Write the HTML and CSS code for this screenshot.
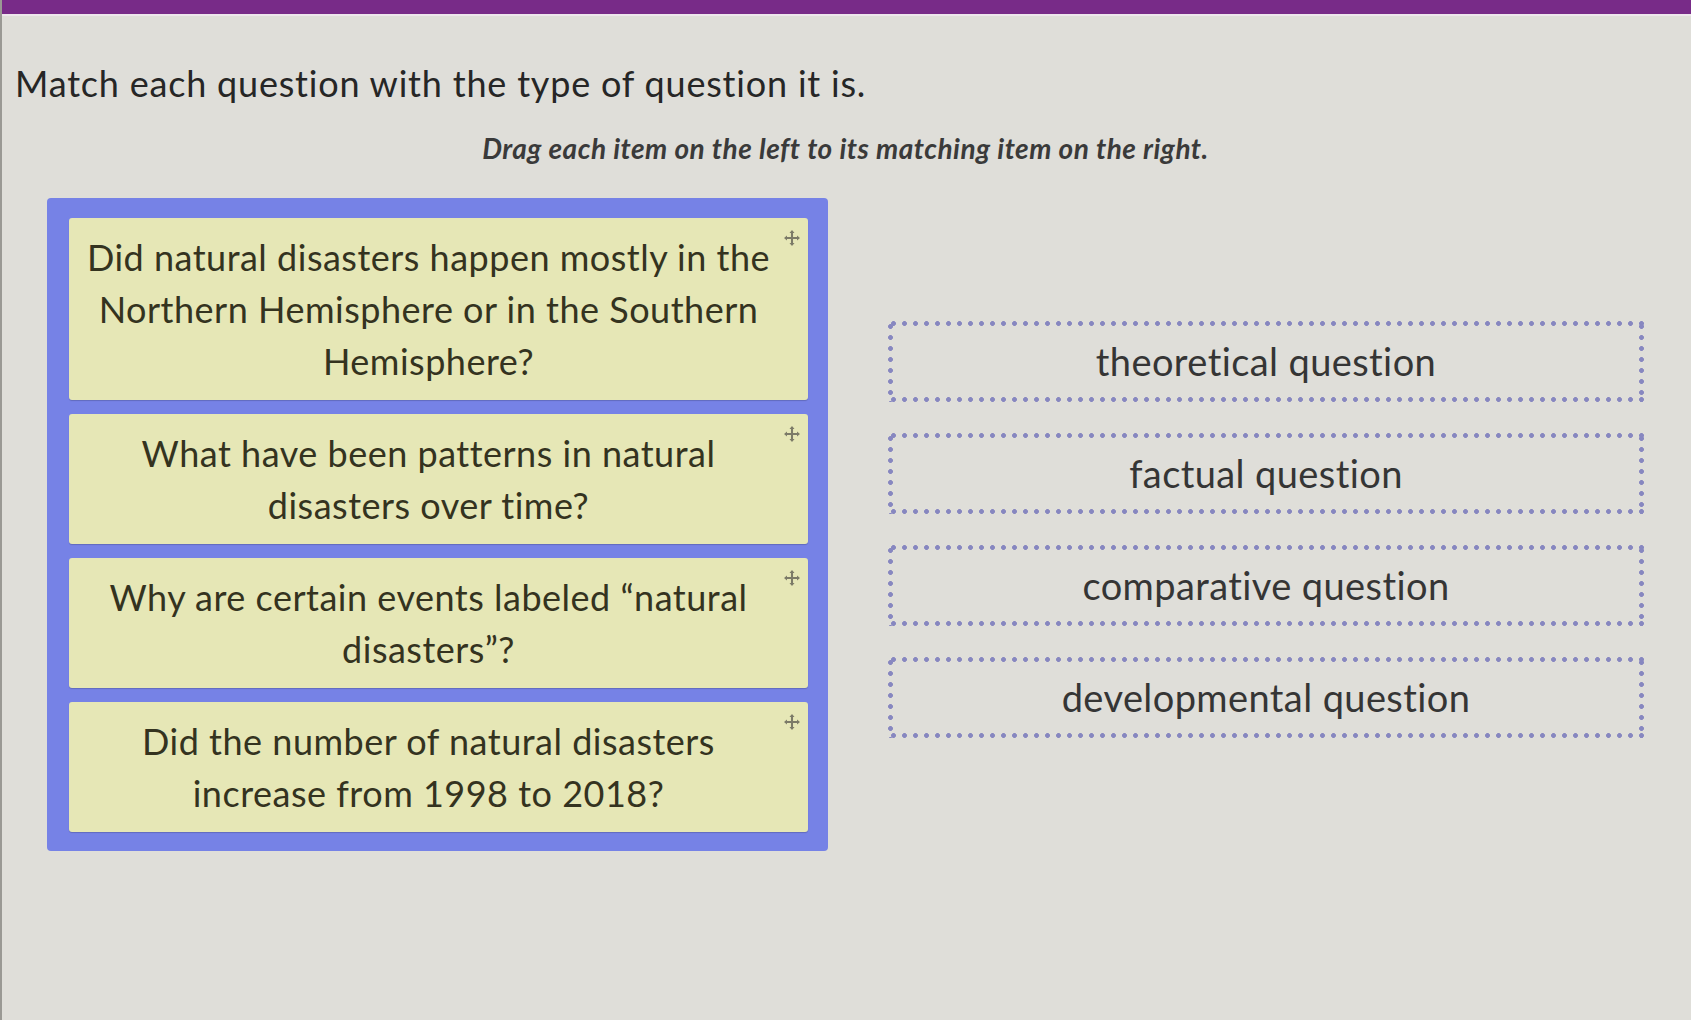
FILE: index.html
```html
<!DOCTYPE html>
<html lang="en">
<head>
    <meta charset="UTF-8">
    <meta name="viewport" content="width=device-width, initial-scale=1.0">
    <title>Matching Question</title>
    <link rel="stylesheet" href="styles.css">
</head>
<body>
    <div class="top-bar"></div>
    <div class="page">
        <h1 class="prompt">Match each question with the type of question it is.</h1>
        <p class="instructions">Drag each item on the left to its matching item on the right.</p>

        <div class="match-area">
            <div class="drag-list">
                <div class="drag-item">
                    Did natural disasters happen mostly in the<br>
                    Northern Hemisphere or in the Southern<br>
                    Hemisphere?
                    <svg class="move-icon" viewBox="0 0 14 14"><path d="M7 1v12M1 7h12"/><path class="head" d="M7 0l2.2 2.6H4.8zM7 14l2.2-2.6H4.8zM0 7l2.6-2.2v4.4zM14 7l-2.6-2.2v4.4z"/></svg>
                </div>
                <div class="drag-item">
                    What have been patterns in natural<br>
                    disasters over time?
                    <svg class="move-icon" viewBox="0 0 14 14"><path d="M7 1v12M1 7h12"/><path class="head" d="M7 0l2.2 2.6H4.8zM7 14l2.2-2.6H4.8zM0 7l2.6-2.2v4.4zM14 7l-2.6-2.2v4.4z"/></svg>
                </div>
                <div class="drag-item">
                    Why are certain events labeled &ldquo;natural<br>
                    disasters&rdquo;?
                    <svg class="move-icon" viewBox="0 0 14 14"><path d="M7 1v12M1 7h12"/><path class="head" d="M7 0l2.2 2.6H4.8zM7 14l2.2-2.6H4.8zM0 7l2.6-2.2v4.4zM14 7l-2.6-2.2v4.4z"/></svg>
                </div>
                <div class="drag-item">
                    Did the number of natural disasters<br>
                    increase from 1998 to 2018?
                    <svg class="move-icon" viewBox="0 0 14 14"><path d="M7 1v12M1 7h12"/><path class="head" d="M7 0l2.2 2.6H4.8zM7 14l2.2-2.6H4.8zM0 7l2.6-2.2v4.4zM14 7l-2.6-2.2v4.4z"/></svg>
                </div>
            </div>

            <div class="drop-list">
                <div class="drop-zone">theoretical question</div>
                <div class="drop-zone">factual question</div>
                <div class="drop-zone">comparative question</div>
                <div class="drop-zone">developmental question</div>
            </div>
        </div>
    </div>
</body>
</html>
```

FILE: styles.css
```css
body {
    font-family: Lato, "Open Sans", sans-serif;
    margin: 0;
    padding: 0;
    background-color: #dfded9;
    border-left: 2px solid #9a9994;
    min-height: 1020px;
    box-sizing: border-box;
}

.top-bar {
    height: 14px;
    background-color: #782b88;
    border-bottom: 2px solid #eee6ec;
}

.page {
    padding: 0 47px 0 45px;
}

.prompt {
    margin: 46px 0 0 -32px;
    font-size: 36px;
    font-weight: 400;
    letter-spacing: 0.8px;
    line-height: 1.2;
    color: #262626;
}

.instructions {
    margin: 27px 0 0;
    text-align: center;
    font-size: 28px;
    font-weight: 700;
    font-style: italic;
    letter-spacing: 0.5px;
    line-height: 1.2;
    color: #3a3a3a;
}

.match-area {
    display: flex;
    align-items: center;
    gap: 60px;
    margin-top: 32px;
}

.drag-list {
    width: 781px;
    flex-shrink: 0;
    box-sizing: border-box;
    padding: 20px 20px 19px 22px;
    background-color: #7682e6;
    border-radius: 4px;
    display: flex;
    flex-direction: column;
    gap: 14px;
}

.drag-item {
    position: relative;
    padding: 13px 36px 13px 16px;
    background-color: #e6e7b6;
    border-radius: 3px;
    box-shadow: 0 1px 1px rgba(0, 0, 0, 0.18);
    text-align: center;
    font-size: 36px;
    letter-spacing: 0.5px;
    line-height: 52px;
    color: #34331f;
}

.move-icon {
    position: absolute;
    top: 12px;
    right: 8px;
    width: 16px;
    height: 16px;
    stroke: #7c7b68;
    stroke-width: 1.8;
    fill: none;
}

.move-icon .head {
    fill: #7c7b68;
    stroke: none;
}

.drop-list {
    flex: 1;
    display: flex;
    flex-direction: column;
    gap: 31px;
    padding-top: 10px;
}

.drop-zone {
    height: 81px;
    display: flex;
    align-items: center;
    justify-content: center;
    font-size: 38px;
    letter-spacing: 0.4px;
    color: #353535;
    background:
        radial-gradient(circle, #8787c0 2.1px, transparent 2.7px) top left / 11px 5px repeat-x,
        radial-gradient(circle, #8787c0 2.1px, transparent 2.7px) bottom left / 11px 5px repeat-x,
        radial-gradient(circle, #8787c0 2.1px, transparent 2.7px) top left / 5px 11px repeat-y,
        radial-gradient(circle, #8787c0 2.1px, transparent 2.7px) top right / 5px 11px repeat-y;
}
```
